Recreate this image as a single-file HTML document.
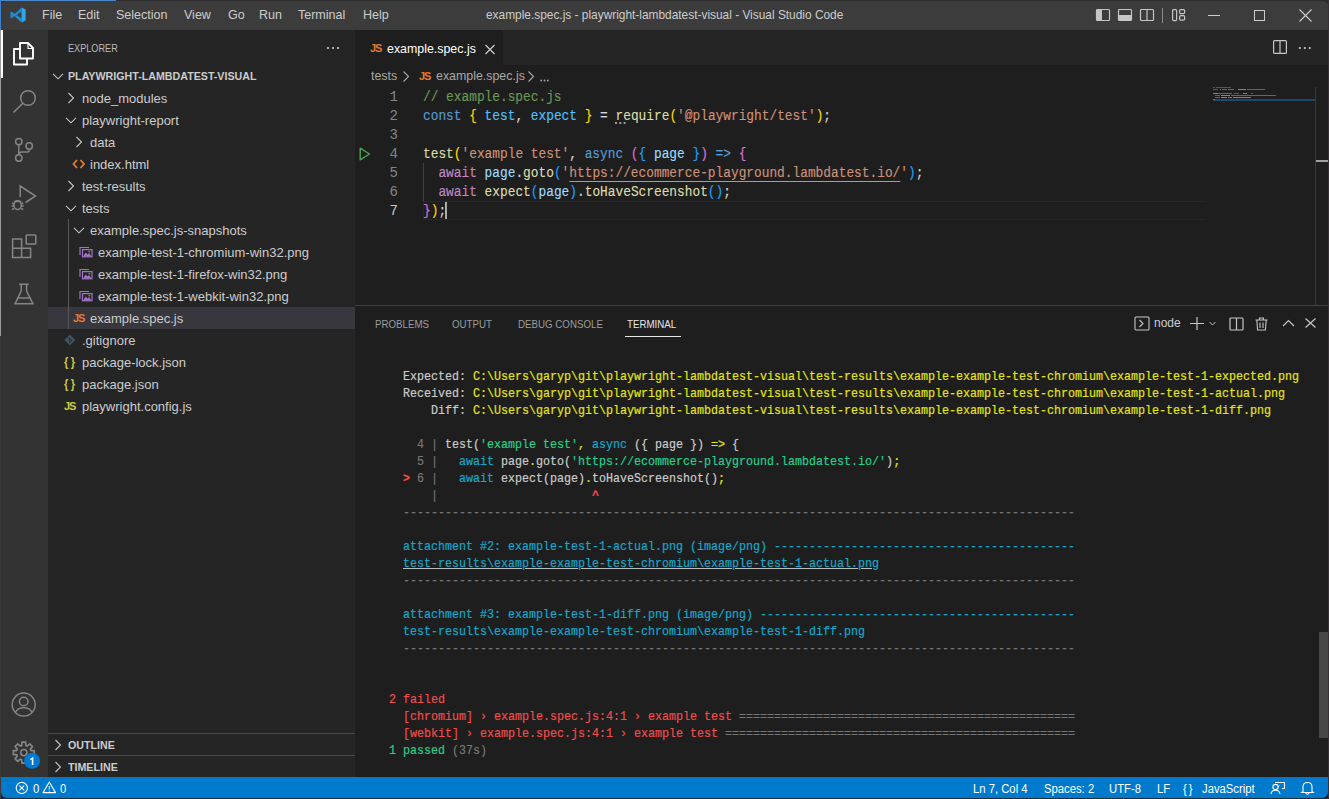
<!DOCTYPE html>
<html><head><meta charset="utf-8">
<style>
*{box-sizing:border-box;margin:0;padding:0}
html,body{width:1329px;height:799px;overflow:hidden;background:#2c2c2c;font-family:"Liberation Sans",sans-serif}
.a{position:absolute;white-space:pre}
svg{position:absolute;overflow:visible}
#win{position:absolute;left:1px;top:1px;width:1328px;height:798px;background:#1e1e1e;border-radius:4px 6px 6px 6px;overflow:hidden}
.mono{font-family:"Liberation Mono",monospace}
.t{color:#cccccc;font-size:12.5px;top:8px}
.row{margin-top:1px;position:absolute;left:48px;width:307px;height:22px;line-height:22px;font-size:13px;color:#cccccc;white-space:pre}
.code{-webkit-text-stroke:0.15px;margin-top:1px;position:absolute;left:423px;height:19px;line-height:19px;font-size:14px;transform:scaleX(0.9162);transform-origin:0 0;white-space:pre;color:#d4d4d4;font-family:"Liberation Mono",monospace}
.ln{margin-top:1px;position:absolute;left:340px;width:58px;text-align:right;height:19px;line-height:19px;font-size:14px;color:#858585;font-family:"Liberation Mono",monospace}
.term{-webkit-text-stroke:0.2px;position:absolute;left:389px;height:17px;line-height:17px;font-size:13px;transform:scaleX(0.8974);transform-origin:0 0;white-space:pre;color:#cccccc;font-family:"Liberation Mono",monospace}
.pt{top:318px;font-size:11px;color:#9d9d9d;transform:scaleX(0.885);transform-origin:0 0}
.st{top:782px;font-size:12px;color:#ffffff;transform:scaleX(0.94);transform-origin:0 0}
</style></head><body>
<div id="win"></div>
<div class="a" style="left:0;top:0;width:116px;height:1px;background:#4a86c8"></div>
<div class="a" style="left:0;top:0;width:1px;height:30px;background:#3f7fcf"></div>
<div class="a" style="left:0;top:30px;width:1px;height:306px;background:#9a9a9a"></div>
<div class="a" style="left:0;top:336px;width:1px;height:463px;background:#3a3a3a"></div>
<!-- TITLE BAR -->
<div class="a" style="left:1px;top:1px;width:1328px;height:29px;background:#3c3c3c;border-radius:4px 6px 0 0"></div>
<!-- vscode logo -->
<svg style="left:10px;top:7px" width="16" height="16" viewBox="0 0 16 16">
  <path d="M11.5 0.6 L15.6 2.6 V13.4 L11.5 15.4 Z" fill="#2fa7f0"/>
  <path d="M11.6 0.6 L4.6 7.0 L1.6 4.7 L0.4 5.3 V10.7 L1.6 11.3 L4.6 9.0 L11.6 15.4 L11.6 11.6 L6.6 8.0 L11.6 4.4 Z" fill="#1f8ad2"/>
  <path d="M0.4 5.3 L1.6 4.7 L11.6 12.1 V15.4 Z" fill="#2489ca"/>
</svg>
<div class="a t" style="left:42px">File</div>
<div class="a t" style="left:78px">Edit</div>
<div class="a t" style="left:116px">Selection</div>
<div class="a t" style="left:184px">View</div>
<div class="a t" style="left:228px">Go</div>
<div class="a t" style="left:259px">Run</div>
<div class="a t" style="left:298px">Terminal</div>
<div class="a t" style="left:363px">Help</div>
<div class="a" style="left:486px;top:8px;font-size:11.9px;color:#cccccc">example.spec.js - playwright-lambdatest-visual - Visual Studio Code</div>
<!-- layout icons -->
<svg style="left:1095px;top:8px" width="16" height="14" viewBox="0 0 16 14"><rect x="1.5" y="1.5" width="13" height="11" rx="1" fill="none" stroke="#c5c5c5" stroke-width="1.2"/><rect x="2" y="2" width="5" height="10" fill="#c5c5c5"/></svg>
<svg style="left:1117px;top:8px" width="16" height="14" viewBox="0 0 16 14"><rect x="1.5" y="1.5" width="13" height="11" rx="1" fill="none" stroke="#c5c5c5" stroke-width="1.2"/><rect x="2" y="7" width="12" height="5" fill="#c5c5c5"/></svg>
<svg style="left:1139px;top:8px" width="16" height="14" viewBox="0 0 16 14"><rect x="1.5" y="1.5" width="13" height="11" rx="1" fill="none" stroke="#c5c5c5" stroke-width="1.2"/><line x1="8" y1="2" x2="8" y2="12" stroke="#c5c5c5" stroke-width="1.2"/></svg>
<div class="a" style="left:1162px;top:8px;width:1px;height:15px;background:#8a8a8a"></div>
<svg style="left:1171px;top:8px" width="16" height="14" viewBox="0 0 16 14"><rect x="1.6" y="1.6" width="4" height="11" rx="1" fill="none" stroke="#c5c5c5" stroke-width="1.2"/><rect x="8.6" y="1.6" width="5" height="4" rx="1.2" fill="none" stroke="#c5c5c5" stroke-width="1.2"/><rect x="8.6" y="7.6" width="5" height="4.5" rx="1.2" fill="none" stroke="#c5c5c5" stroke-width="1.2"/></svg>
<div class="a" style="left:1208px;top:15px;width:12px;height:1px;background:#cccccc"></div>
<div class="a" style="left:1254px;top:10px;width:11px;height:11px;border:1px solid #cccccc"></div>
<svg style="left:1299px;top:9px" width="13" height="13" viewBox="0 0 13 13"><path d="M0.5 0.5 L12.5 12.5 M12.5 0.5 L0.5 12.5" stroke="#cccccc" stroke-width="1.1"/></svg>

<!-- ACTIVITY BAR -->
<div class="a" style="left:1px;top:30px;width:47px;height:747px;background:#333333"></div>
<div class="a" style="left:1px;top:30px;width:2px;height:48px;background:#ffffff"></div>


<!-- SIDEBAR -->
<div class="a" style="left:48px;top:30px;width:307px;height:747px;background:#252526"></div>
<div class="a" style="left:68px;top:42px;font-size:11px;color:#bbbbbb;transform:scaleX(0.83);transform-origin:0 0">EXPLORER</div>
<svg style="left:326px;top:46px" width="14" height="4"><circle cx="2" cy="2" r="1.1" fill="#cccccc"/><circle cx="7" cy="2" r="1.1" fill="#cccccc"/><circle cx="12" cy="2" r="1.1" fill="#cccccc"/></svg>
<div class="a" style="left:48px;top:307px;width:307px;height:22px;background:#37373d"></div>
<div class="a" style="left:68px;top:219px;width:1px;height:110px;background:#585858"></div>
<div class="a" style="left:68px;top:70px;font-size:11px;font-weight:bold;color:#cccccc;transform:scaleX(0.97);transform-origin:0 0">PLAYWRIGHT-LAMBDATEST-VISUAL</div>
<div class="row" style="top:87px;left:82px">node_modules</div>
<div class="row" style="top:109px;left:82px">playwright-report</div>
<div class="row" style="top:131px;left:90px">data</div>
<div class="row" style="top:153px;left:90px">index.html</div>
<div class="row" style="top:175px;left:82px">test-results</div>
<div class="row" style="top:197px;left:82px">tests</div>
<div class="row" style="top:219px;left:90px">example.spec.js-snapshots</div>
<div class="row" style="top:241px;left:98px">example-test-1-chromium-win32.png</div>
<div class="row" style="top:263px;left:98px">example-test-1-firefox-win32.png</div>
<div class="row" style="top:285px;left:98px">example-test-1-webkit-win32.png</div>
<div class="row" style="top:307px;left:90px">example.spec.js</div>
<div class="row" style="top:329px;left:82px">.gitignore</div>
<div class="row" style="top:351px;left:82px">package-lock.json</div>
<div class="row" style="top:373px;left:82px">package.json</div>
<div class="row" style="top:395px;left:82px">playwright.config.js</div>
<svg style="left:0;top:0" width="360" height="799" viewBox="0 0 360 799">
 <g fill="none" stroke="#c5c5c5" stroke-width="1.1">
  <path d="M53 73.8 L58 78.8 L63 73.8"/>
  <path d="M68.5 93 L73.5 98 L68.5 103"/>
  <path d="M66 117.8 L71 122.8 L76 117.8"/>
  <path d="M76.5 137 L81.5 142 L76.5 147"/>
  <path d="M68.5 181 L73.5 186 L68.5 191"/>
  <path d="M66 205.8 L71 210.8 L76 205.8"/>
  <path d="M74 227.8 L79 232.8 L84 227.8"/>
  <path d="M55.5 740 L60.5 745 L55.5 750"/>
  <path d="M55.5 762 L60.5 767 L55.5 772"/>
 </g>
 <path d="M77 160 L73.5 164 L77 168 M80.5 160 L84 164 L80.5 168" fill="none" stroke="#e37933" stroke-width="1.8"/>
 <g id="png">
  <path d="M80 255 V247.5 H89" fill="none" stroke="#a074c4" stroke-width="1.2"/>
  <rect x="82.5" y="249.6" width="9.5" height="7.2" fill="none" stroke="#a074c4" stroke-width="1.2"/>
  <path d="M83 256.5 L85.8 252.5 L87.5 254.5 L89 253 L91.5 256.5 Z" fill="#a074c4"/>
  <circle cx="89.3" cy="251.6" r="0.9" fill="#a074c4"/>
 </g>
 <use href="#png" y="22"/>
 <use href="#png" y="44"/>
 <path d="M69.8 334.6 L75.3 340 L69.8 345.4 L64.3 340 Z" fill="#41535b"/>
 <path d="M68.5 337.5 L72 341 M69.8 338 V343" stroke="#252526" stroke-width="0.9"/>
</svg>
<div class="a" style="left:73px;top:312px;font-size:11px;font-weight:bold;color:#e37933;letter-spacing:-1.2px">JS</div>
<div class="a" style="left:64px;top:400px;font-size:11px;font-weight:bold;color:#cbcb41;letter-spacing:-1.2px">JS</div>
<div class="a" style="left:64px;top:354px;font-size:13px;font-weight:bold;color:#cbcb41;letter-spacing:3px;transform:scaleX(0.85);transform-origin:0 0">{}</div>
<div class="a" style="left:64px;top:376px;font-size:13px;font-weight:bold;color:#cbcb41;letter-spacing:3px;transform:scaleX(0.85);transform-origin:0 0">{}</div>
<div class="a" style="left:48px;top:733px;width:307px;height:1px;background:#4a4a4a"></div>
<div class="a" style="left:48px;top:755px;width:307px;height:1px;background:#4a4a4a"></div>
<div class="a" style="left:68px;top:739px;font-size:11px;font-weight:bold;color:#cccccc;transform:scaleX(0.97);transform-origin:0 0">OUTLINE</div>
<div class="a" style="left:68px;top:761px;font-size:11px;font-weight:bold;color:#cccccc;transform:scaleX(0.97);transform-origin:0 0">TIMELINE</div>

<!-- EDITOR -->
<div class="a" style="left:355px;top:30px;width:974px;height:35px;background:#252526"></div>
<div class="a" style="left:355px;top:30px;width:148px;height:35px;background:#1e1e1e"></div>
<div class="a" style="left:370px;top:42px;font-size:11px;font-weight:bold;color:#e37933;letter-spacing:-1.2px">JS</div>
<div class="a" style="left:387px;top:41.5px;font-size:12.4px;color:#ffffff">example.spec.js</div>
<svg style="left:485px;top:44.5px" width="10" height="9" viewBox="0 0 10 9"><path d="M0.5 0 L9.5 9 M9.5 0 L0.5 9" stroke="#cccccc" stroke-width="1.2"/></svg>
<svg style="left:1273px;top:40px" width="14" height="14" viewBox="0 0 14 14"><rect x="0.6" y="0.6" width="12.8" height="12.8" rx="1" fill="none" stroke="#c5c5c5" stroke-width="1.2"/><line x1="7" y1="1" x2="7" y2="13" stroke="#c5c5c5" stroke-width="1.2"/></svg>
<svg style="left:1298px;top:46px" width="14" height="4"><circle cx="1.8" cy="2" r="1.1" fill="#cccccc"/><circle cx="6.8" cy="2" r="1.1" fill="#cccccc"/><circle cx="11.8" cy="2" r="1.1" fill="#cccccc"/></svg>
<!-- breadcrumbs -->
<div class="a" style="left:371px;top:69px;font-size:12.4px;color:#a9a9a9">tests</div>
<svg style="left:402px;top:71px" width="8" height="11" viewBox="0 0 8 11"><path d="M1.5 0.5 L6.5 5.5 L1.5 10.5" fill="none" stroke="#a9a9a9" stroke-width="1.1"/></svg>
<div class="a" style="left:419px;top:70px;font-size:11px;font-weight:bold;color:#e37933;letter-spacing:-1.2px">JS</div>
<div class="a" style="left:436px;top:69px;font-size:12.4px;color:#a9a9a9">example.spec.js</div>
<svg style="left:527px;top:71px" width="8" height="11" viewBox="0 0 8 11"><path d="M1.5 0.5 L6.5 5.5 L1.5 10.5" fill="none" stroke="#a9a9a9" stroke-width="1.1"/></svg>
<svg style="left:540px;top:79px" width="10" height="3"><circle cx="1.2" cy="1.5" r="0.9" fill="#a9a9a9"/><circle cx="4.5" cy="1.5" r="0.9" fill="#a9a9a9"/><circle cx="7.8" cy="1.5" r="0.9" fill="#a9a9a9"/></svg>
<!-- code -->
<div class="a" style="left:423px;top:201px;width:782px;height:19px;border:1px solid #282828;border-right:none"></div>
<div class="a" style="left:423px;top:163px;width:1px;height:38px;background:#404040"></div>
<div class="ln" style="top:87px">1</div>
<div class="ln" style="top:106px">2</div>
<div class="ln" style="top:125px">3</div>
<div class="ln" style="top:144px">4</div>
<div class="ln" style="top:163px">5</div>
<div class="ln" style="top:182px">6</div>
<div class="ln" style="top:201px;color:#c6c6c6">7</div>
<svg style="left:359px;top:147px" width="12" height="14" viewBox="0 0 12 14"><path d="M1.2 1.2 L10.5 7 L1.2 12.8 Z" fill="none" stroke="#4aa556" stroke-width="1.4" stroke-linejoin="round"/></svg>
<div class="code" style="top:87px;color:#6a9955">// example.spec.js</div>
<div class="code" style="top:106px"><span style="color:#569cd6">const</span> <span style="color:#ffd700">{</span> <span style="color:#4fc1ff">test</span>, <span style="color:#4fc1ff">expect</span> <span style="color:#ffd700">}</span> = <span style="color:#dcdcaa">require</span><span style="color:#ffd700">(</span><span style="color:#ce9178">'@playwright/test'</span><span style="color:#ffd700">)</span>;</div>
<div class="code" style="top:144px"><span style="color:#dcdcaa">test</span><span style="color:#ffd700">(</span><span style="color:#ce9178">'example test'</span>, <span style="color:#569cd6">async</span> <span style="color:#da70d6">(</span><span style="color:#179fff">{</span> <span style="color:#9cdcfe">page</span> <span style="color:#179fff">}</span><span style="color:#da70d6">)</span> <span style="color:#569cd6">=&gt;</span> <span style="color:#da70d6">{</span></div>
<div class="code" style="top:163px">  <span style="color:#c586c0">await</span> <span style="color:#9cdcfe">page</span>.<span style="color:#dcdcaa">goto</span><span style="color:#179fff">(</span><span style="color:#ce9178">'<span style="text-decoration:underline;text-underline-offset:4px">https://ecommerce-playground.lambdatest.io/</span>'</span><span style="color:#179fff">)</span>;</div>
<div class="code" style="top:182px">  <span style="color:#c586c0">await</span> <span style="color:#dcdcaa">expect</span><span style="color:#179fff">(</span><span style="color:#9cdcfe">page</span><span style="color:#179fff">)</span>.<span style="color:#dcdcaa">toHaveScreenshot</span><span style="color:#179fff">()</span>;</div>
<div class="code" style="top:201px"><span style="color:#da70d6">}</span><span style="color:#ffd700">)</span>;</div>
<div class="a" style="left:445px;top:202px;width:2px;height:17px;background:#aeafad"></div>
<svg style="left:615px;top:122px" width="11" height="2"><rect x="0" y="0" width="2" height="2" fill="#9a9a9a"/><rect x="4.3" y="0" width="2" height="2" fill="#9a9a9a"/><rect x="8.6" y="0" width="2" height="2" fill="#9a9a9a"/></svg>
<!-- minimap -->
<div class="a" style="left:1213px;top:99px;width:102px;height:2px;background:#22466b"></div>
<div class="a" style="left:1315px;top:87px;width:1px;height:218px;background:#3a3a3a"></div>
<div class="a" style="left:1316px;top:160px;width:12px;height:2px;background:#a0a0a0"></div>
<svg style="left:1213px;top:87px" width="100" height="14">
 <g opacity="0.55">
 <rect x="0" y="0" width="2" height="1" fill="#6a9955"/><rect x="3" y="0" width="15" height="1" fill="#6a9955"/>
 <rect x="0" y="2" width="5" height="1" fill="#569cd6"/><rect x="7" y="2" width="1" height="1" fill="#ffd700"/><rect x="9" y="2" width="5" height="1" fill="#4fc1ff"/><rect x="15" y="2" width="6" height="1" fill="#4fc1ff"/><rect x="25" y="2" width="8" height="1" fill="#dcdcaa"/><rect x="34" y="2" width="18" height="1" fill="#ce9178"/>
 <rect x="0" y="6" width="5" height="1" fill="#dcdcaa"/><rect x="5" y="6" width="14" height="1" fill="#ce9178"/><rect x="21" y="6" width="5" height="1" fill="#569cd6"/><rect x="30" y="6" width="4" height="1" fill="#9cdcfe"/><rect x="38" y="6" width="2" height="1" fill="#569cd6"/>
 <rect x="2" y="8" width="5" height="1" fill="#c586c0"/><rect x="8" y="8" width="9" height="1" fill="#dcdcaa"/><rect x="18" y="8" width="45" height="1" fill="#ce9178"/>
 <rect x="2" y="10" width="5" height="1" fill="#c586c0"/><rect x="8" y="10" width="6" height="1" fill="#dcdcaa"/><rect x="15" y="10" width="4" height="1" fill="#9cdcfe"/><rect x="20" y="10" width="18" height="1" fill="#dcdcaa"/>
 <rect x="0" y="12" width="2" height="1" fill="#da70d6"/>
 </g>
</svg>

<!-- PANEL -->
<div class="a" style="left:355px;top:305px;width:974px;height:1px;background:#414141"></div>
<div class="a pt" style="left:375px">PROBLEMS</div>
<div class="a pt" style="left:452px">OUTPUT</div>
<div class="a pt" style="left:518px">DEBUG CONSOLE</div>
<div class="a pt" style="left:627px;color:#e7e7e7">TERMINAL</div>
<div class="a" style="left:625px;top:336px;width:56px;height:1px;background:#e7e7e7"></div>
<svg style="left:1134px;top:316px" width="16" height="15" viewBox="0 0 16 15"><rect x="1" y="1" width="14" height="13" rx="1" fill="none" stroke="#c5c5c5" stroke-width="1.1"/><path d="M5.5 4 L9 7.5 L5.5 11" fill="none" stroke="#c5c5c5" stroke-width="1.1"/></svg>
<div class="a" style="left:1154px;top:316px;font-size:12px;color:#cccccc">node</div>
<svg style="left:1189px;top:316px" width="30" height="15" viewBox="0 0 30 15"><path d="M1 7.5 H15 M8 1 V14" stroke="#c5c5c5" stroke-width="1.2"/><path d="M20.5 6 L23.5 9 L26.5 6" fill="none" stroke="#c5c5c5" stroke-width="1"/></svg>
<svg style="left:1229px;top:317px" width="15" height="14" viewBox="0 0 15 14"><rect x="1" y="1" width="13" height="12" rx="1" fill="none" stroke="#c5c5c5" stroke-width="1.2"/><line x1="7.5" y1="1" x2="7.5" y2="13" stroke="#c5c5c5" stroke-width="1.2"/></svg>
<svg style="left:1255px;top:317px" width="13" height="14" viewBox="0 0 13 14"><path d="M0.5 3 H12.5 M4.5 3 V1 H8.5 V3 M1.8 3 L2.6 13 H10.4 L11.2 3 M5 5.5 V11 M8 5.5 V11" fill="none" stroke="#c5c5c5" stroke-width="1.1"/></svg>
<svg style="left:1282px;top:319px" width="13" height="8" viewBox="0 0 13 8"><path d="M1 7 L6.5 1.5 L12 7" fill="none" stroke="#c5c5c5" stroke-width="1.2"/></svg>
<svg style="left:1305px;top:318px" width="11" height="10" viewBox="0 0 11 10"><path d="M0.5 0.5 L10.5 9.5 M10.5 0.5 L0.5 9.5" stroke="#c5c5c5" stroke-width="1.2"/></svg>
<div class="a" style="left:1319px;top:632px;width:10px;height:106px;background:#474747"></div>

<div class="term" style="top:368px">  Expected: <span style="color:#e5e510">C:\Users\garyp\git\playwright-lambdatest-visual\test-results\example-example-test-chromium\example-test-1-expected.png</span></div>
<div class="term" style="top:385px">  Received: <span style="color:#e5e510">C:\Users\garyp\git\playwright-lambdatest-visual\test-results\example-example-test-chromium\example-test-1-actual.png</span></div>
<div class="term" style="top:402px">      Diff: <span style="color:#e5e510">C:\Users\garyp\git\playwright-lambdatest-visual\test-results\example-example-test-chromium\example-test-1-diff.png</span></div>
<div class="term" style="top:436px">    <span style="color:#767676">4 |</span> test(<span style="color:#23d18b">'example test'</span><span style="color:#e5e510">,</span> <span style="color:#11a8cd">async</span> ({ page }) <span style="color:#e5e510">=&gt;</span> {</div>
<div class="term" style="top:453px">    <span style="color:#767676">5 |</span>   <span style="color:#11a8cd">await</span> page<span style="color:#e5e510">.</span>goto(<span style="color:#23d18b">'https://ecommerce-playground.lambdatest.io/'</span>)<span style="color:#e5e510">;</span></div>
<div class="term" style="top:470px">  <span style="color:#f14c4c;font-weight:bold">&gt;</span> <span style="color:#767676">6 |</span>   <span style="color:#11a8cd">await</span> expect(page)<span style="color:#e5e510">.</span>toHaveScreenshot()<span style="color:#e5e510">;</span></div>
<div class="term" style="top:487px">      <span style="color:#767676">|</span>                      <span style="color:#f14c4c;font-weight:bold">^</span></div>
<div class="term" style="top:504px">  <span style="color:#767676">------------------------------------------------------------------------------------------------</span></div>
<div class="term" style="top:538px"><span style="color:#11a8cd">  attachment #2: example-test-1-actual.png (image/png) -------------------------------------------</span></div>
<div class="term" style="top:555px">  <span style="color:#11a8cd"><u style="text-decoration-color:#bbbbbb">test-results\example-example-test-chromium\example-test-1-actual.png</u></span></div>
<div class="term" style="top:572px">  <span style="color:#767676">------------------------------------------------------------------------------------------------</span></div>
<div class="term" style="top:606px"><span style="color:#11a8cd">  attachment #3: example-test-1-diff.png (image/png) ---------------------------------------------</span></div>
<div class="term" style="top:623px">  <span style="color:#11a8cd">test-results\example-example-test-chromium\example-test-1-diff.png</span></div>
<div class="term" style="top:640px">  <span style="color:#767676">------------------------------------------------------------------------------------------------</span></div>
<div class="term" style="top:691px"><span style="color:#f14c4c">2 failed</span></div>
<div class="term" style="top:708px">  <span style="color:#f14c4c">[chromium] › example.spec.js:4:1 › example test</span> <span style="color:#767676">================================================</span></div>
<div class="term" style="top:725px">  <span style="color:#f14c4c">[webkit] › example.spec.js:4:1 › example test</span> <span style="color:#767676">==================================================</span></div>
<div class="term" style="top:742px"><span style="color:#23d18b">1 passed</span> <span style="color:#767676">(37s)</span></div>

<!-- STATUS -->
<div class="a" style="left:1px;top:777px;width:1327px;height:21px;background:#007acc;border-radius:0 0 6px 6px"></div>
<svg style="left:0;top:777px" width="80" height="21" viewBox="0 0 80 21">
 <circle cx="21.8" cy="11" r="5.6" fill="none" stroke="#ffffff" stroke-width="1.1"/>
 <path d="M19.4 8.6 L24.2 13.4 M24.2 8.6 L19.4 13.4" stroke="#ffffff" stroke-width="1.1"/>
 <path d="M49.3 5 L55.5 15.6 H43.1 Z" fill="none" stroke="#ffffff" stroke-width="1.1" stroke-linejoin="round"/>
 <path d="M49.3 9 V12.5 M49.3 13.6 V14.6" stroke="#ffffff" stroke-width="1"/>
</svg>
<div class="a st" style="left:33px">0</div>
<div class="a st" style="left:60px">0</div>
<div class="a st" style="left:973px">Ln 7, Col 4</div>
<div class="a st" style="left:1044px">Spaces: 2</div>
<div class="a st" style="left:1109px">UTF-8</div>
<div class="a st" style="left:1157px">LF</div>
<div class="a st" style="left:1183px;letter-spacing:2px">{}</div>
<div class="a st" style="left:1202px">JavaScript</div>
<svg style="left:1270px;top:781px" width="16" height="14" viewBox="0 0 16 14"><path d="M5 1.5 H14.5 V7.5 H12" fill="none" stroke="#fff" stroke-width="1.1"/><path d="M9.5 4.5 L8 6" stroke="#fff" stroke-width="1"/><circle cx="5.5" cy="6" r="2.6" fill="none" stroke="#fff" stroke-width="1.1"/><path d="M1 13 Q1.5 9.2 5.5 9.2 Q9.5 9.2 10 13" fill="none" stroke="#fff" stroke-width="1.1"/></svg>
<svg style="left:1301px;top:781px" width="13" height="14" viewBox="0 0 13 14"><path d="M2 10.5 V6 Q2 1.5 6.5 1.5 Q11 1.5 11 6 V10.5 L12.2 11.5 H0.8 Z M5 12 Q5 13.2 6.5 13.2 Q8 13.2 8 12" fill="none" stroke="#fff" stroke-width="1.1"/></svg>
<!-- activity icons -->
<svg style="left:0;top:0" width="48" height="799" viewBox="0 0 48 799">
 <g fill="none" stroke-linejoin="round">
  <path d="M20 49 H14 V64.5 H27 V58.5" stroke="#ffffff" stroke-width="1.9"/>
  <path d="M20 43 H28 L33 48 V58.5 H20 Z" stroke="#ffffff" stroke-width="1.9"/>
  <path d="M28 43.5 V48.5 H32.5" stroke="#ffffff" stroke-width="1.2"/>
 </g>
 <g fill="none" stroke="#858585" stroke-width="1.5">
  <circle cx="28" cy="98" r="7.3"/>
  <path d="M22.8 103.2 L13.5 112.5" stroke-width="1.6"/>
  <circle cx="18.8" cy="141.6" r="3.2"/>
  <circle cx="18.8" cy="158" r="3.2"/>
  <circle cx="29.2" cy="146" r="3.2"/>
  <path d="M18.8 144.8 V154.8"/>
  <path d="M29.2 149.2 V150.5 Q29.2 152 27.7 152 H22 Q18.8 152 18.8 155"/>
  <path d="M20.2 197 V186 L35.5 196 L25.6 202.5"/>
  <ellipse cx="17.6" cy="205" rx="3.6" ry="4.6"/>
  <path d="M14 201.5 H21.2 M12 203 L14 204 M23.2 203 L21.2 204 M11.5 206 H14 M21.2 206 H23.7 M12 209.5 L14 208.5 M23.2 209.5 L21.2 208.5"/>
  <path d="M12.6 248.2 V257.4 H30.6 V248.2 H21.6 V239 H12.6 Z M12.6 248.2 H21.6 V257.4"/>
  <rect x="26.2" y="235" width="9.6" height="9" rx="0.8"/>
  <path d="M19.2 284.2 H28.6 M21.2 284.2 V291 L15 303.8 H33 L26.6 291 V284.2 M17.8 298 H30.2"/>
  <circle cx="23.7" cy="704.6" r="11.5"/>
  <circle cx="23.7" cy="701.5" r="4.3"/>
  <path d="M15.2 712.5 Q17.5 707.8 23.7 707.8 Q29.9 707.8 32.2 712.5"/>
 </g>
 <g transform="translate(23.8 752.6)" fill="none" stroke="#858585" stroke-width="1.7" stroke-linejoin="miter">
  <path d="M-2.19 -7.07 L-1.79 -10.45 L1.79 -10.45 L2.19 -7.07 L3.45 -6.55 L6.12 -8.66 L8.66 -6.12 L6.55 -3.45 L7.07 -2.19 L10.45 -1.79 L10.45 1.79 L7.07 2.19 L6.55 3.45 L8.66 6.12 L6.12 8.66 L3.45 6.55 L2.19 7.07 L1.79 10.45 L-1.79 10.45 L-2.19 7.07 L-3.45 6.55 L-6.12 8.66 L-8.66 6.12 L-6.55 3.45 L-7.07 2.19 L-10.45 1.79 L-10.45 -1.79 L-7.07 -2.19 L-6.55 -3.45 L-8.66 -6.12 L-6.12 -8.66 L-3.45 -6.55 Z"/>
  <circle r="3.1" stroke-width="1.6"/>
 </g>
 <circle cx="32.1" cy="760.8" r="8" fill="#0078d4"/>
 <path d="M30.4 759.6 L32.6 758.2 V764.9" fill="none" stroke="#ffffff" stroke-width="1.6"/>
</svg>
<div class="a" style="left:1328px;top:0;width:1px;height:799px;background:#3a3136"></div>
<div class="a" style="left:0;top:798px;width:1329px;height:1px;background:#2a2a2a"></div>
</body></html>
